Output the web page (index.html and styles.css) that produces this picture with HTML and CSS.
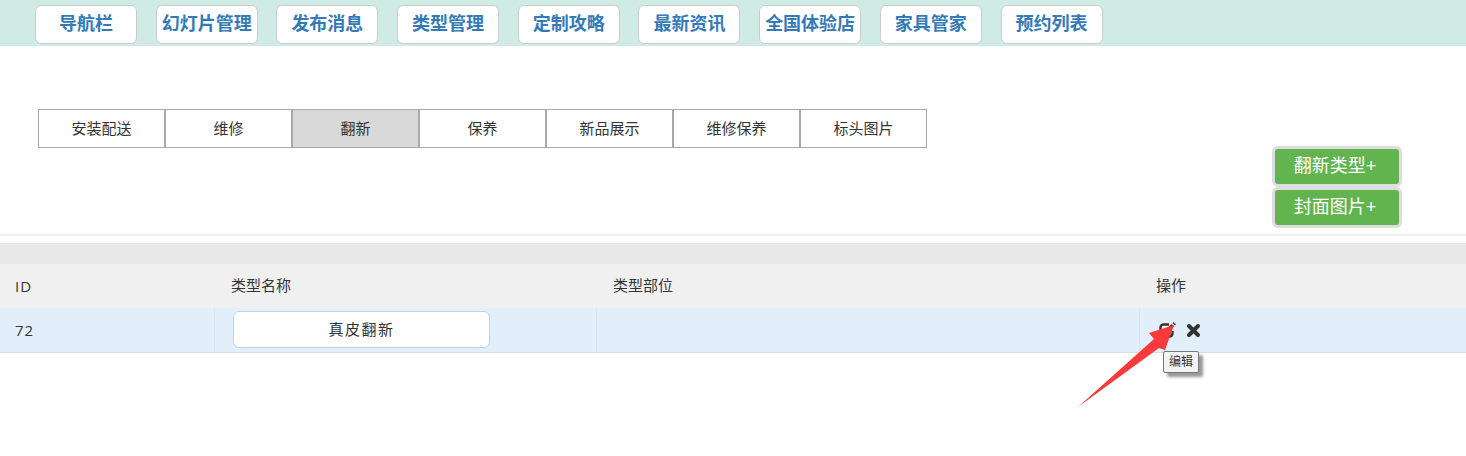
FILE: index.html
```html
<!DOCTYPE html>
<html lang="zh-CN">
<head>
    <meta charset="UTF-8">
    <title>类型管理</title>
    <link rel="stylesheet" href="styles.css">
</head>
<body>
    <!-- 顶部导航 -->
    <div class="nav">
        <a class="nav-btn">导航栏</a>
        <a class="nav-btn">幻灯片管理</a>
        <a class="nav-btn">发布消息</a>
        <a class="nav-btn">类型管理</a>
        <a class="nav-btn">定制攻略</a>
        <a class="nav-btn">最新资讯</a>
        <a class="nav-btn">全国体验店</a>
        <a class="nav-btn">家具管家</a>
        <a class="nav-btn">预约列表</a>
    </div>

    <div class="tabs">
        <div class="tab">安装配送</div>
        <div class="tab">维修</div>
        <div class="tab active">翻新</div>
        <div class="tab">保养</div>
        <div class="tab">新品展示</div>
        <div class="tab">维修保养</div>
        <div class="tab">标头图片</div>
    </div>

    <div class="actions">
        <a class="add-btn">翻新类型+</a>
        <a class="add-btn">封面图片+</a>
    </div>

    <div class="divider"></div>
    <div class="table-top"></div>

    <!-- 类型列表 -->
    <div class="table">
        <div class="row head">
            <div class="cell latin">ID</div>
            <div class="cell">类型名称</div>
            <div class="cell">类型部位</div>
            <div class="cell">操作</div>
        </div>
        <div class="row body">
            <div class="cell latin">72</div>
            <div class="cell name-cell"><div class="name-input">真皮翻新</div></div>
            <div class="cell"></div>
            <div class="cell ops">
                <svg class="icon" width="17" height="16" viewBox="0 0 17 16">
                    <path d="M10 2.500H4.500A3 3 0 0 0 1.500 5.500v6a3 3 0 0 0 3 3h6a3 3 0 0 0 3-3V9" fill="none" stroke="#333" stroke-width="2.400"/>
                    <path d="M6 8.500 12.500 2 15 4.500 8.500 11H6z" fill="#333"/>
                    <path d="M13.500 1 14.500 0 17 2.500 16 3.500z" fill="#333"/>
                </svg>
                <svg class="icon" width="15" height="15" viewBox="0 0 15 15">
                    <path d="M3 3 12 12M12 3 3 12" fill="none" stroke="#333" stroke-width="4" stroke-linecap="round"/>
                </svg>
            </div>
        </div>
    </div>

    <div class="tooltip">编辑</div>

    <!-- 截图标注箭头 -->
    <svg class="arrow" width="100" height="90" viewBox="0 0 100 90">
        <path d="M0 87 L76 19 L71 13 L96 5 L87 30 L81 28 Z" fill="#f83a3a"/>
    </svg>
</body>
</html>
```

FILE: styles.css
```css
body {
    margin: 0;
    height: 456px;
    overflow: hidden;
    position: relative;
    background: white;
    font-family: "Liberation Sans", "Noto Sans CJK SC", sans-serif;
    font-size: 15px;
    color: #333;
}
.nav {
    display: flex;
    gap: 18.7px;
    height: 46px;
    padding: 5px 0 0 35px;
    box-sizing: border-box;
    background: #d0ebe3;
}
.nav-btn {
    width: 102px;
    height: 39px;
    box-sizing: border-box;
    border: 1px solid #ccc;
    border-radius: 6px;
    background: white;
    color: #337ab7;
    font-size: 18px;
    font-weight: bold;
    line-height: 37px;
    text-align: center;
}
.tabs {
    display: flex;
    margin: 63px 0 0 38px;
}
.tab {
    width: 127px;
    height: 39px;
    box-sizing: border-box;
    border: 1px solid #a9a9a9;
    line-height: 37px;
    text-align: center;
}
.tab.active {
    background: #d9d9d9;
}
.actions {
    display: flex;
    flex-direction: column;
    width: 130px;
    margin: -2px 0 0 1272px;
}
.add-btn {
    height: 41px;
    padding-right: 4px;
    box-sizing: border-box;
    border: 3px solid #ddd;
    border-radius: 6px;
    background: #62b44f;
    color: white;
    font-size: 18px;
    line-height: 35px;
    text-align: center;
}
.divider {
    height: 2px;
    margin-top: 6px;
    background: #eee;
}
.table-top {
    height: 21px;
    margin-top: 7px;
    background: #e8e8e8;
}
.row {
    display: grid;
    grid-template-columns: 214px 382px 543px 1fr;
    height: 44px;
}
.row.head {
    background: #f0f0f0;
}
.row.body {
    height: 45px;
    box-sizing: border-box;
    background: #e2eefa;
    border-bottom: 1px solid #ddd;
}
.cell {
    padding: 0 17px;
    line-height: 44px;
}
.latin {
    padding-left: 15px;
    font-family: "Open Sans", "Liberation Sans", sans-serif;
    letter-spacing: 1px;
}
.body .cell + .cell {
    border-left: 1px solid #dce4ec;
}
.name-cell {
    padding: 3px 0 0 18px;
}
.name-input {
    width: 257px;
    height: 37px;
    box-sizing: border-box;
    border: 1px solid #c5cfe0;
    border-radius: 6px;
    background: white;
    letter-spacing: 1.5px;
    line-height: 35px;
    text-align: center;
}
.ops {
    display: flex;
    align-items: center;
    gap: 10px;
    padding: 0 0 0 19px;
    height: 44px;
}
.tooltip {
    position: absolute;
    left: 1163px;
    top: 351px;
    padding: 0 5px;
    height: 20px;
    border: 1px solid #777;
    border-radius: 2px;
    background: #f2f2f7;
    box-shadow: 4px 4px 3px #999;
    font-size: 12px;
    line-height: 20px;
}
.arrow {
    position: absolute;
    left: 1078px;
    top: 320px;
    overflow: visible;
}
```
